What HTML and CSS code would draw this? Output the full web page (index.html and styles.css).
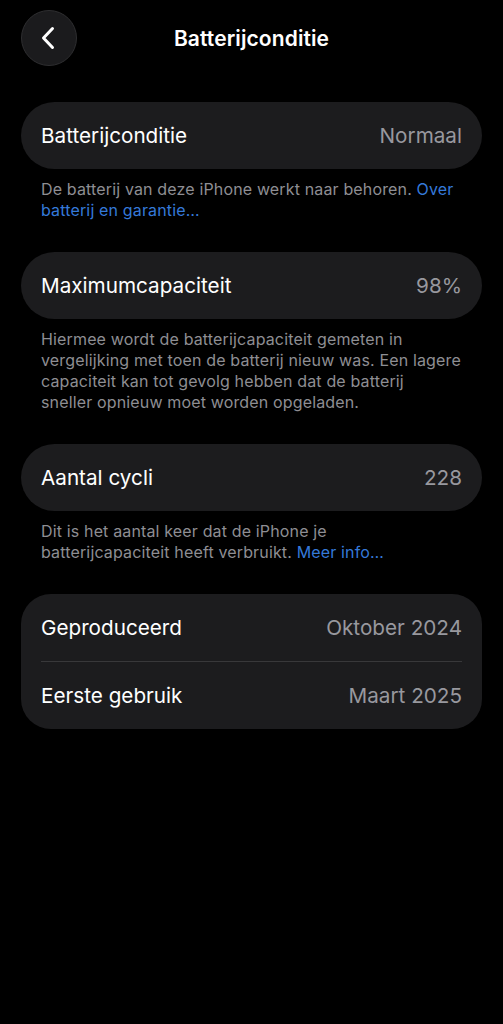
FILE: index.html
```html
<!DOCTYPE html>
<html lang="nl">
<head>
<meta charset="utf-8">
<link rel="stylesheet" href="styles.css">
</head>
<body>
<div class="screen">
  <header class="nav">
    <button class="back" aria-label="Terug">
      <svg width="16" height="24" viewBox="0 0 16 24"><path d="M12.5 2.5 L3.5 12 L12.5 21.5" fill="none" stroke="#fff" stroke-width="3" stroke-linecap="round" stroke-linejoin="round"/></svg>
    </button>
    <h1 class="title">Batterijconditie</h1>
  </header>

  <section class="group">
    <div class="card pill"><div class="row"><span class="label">Batterijconditie</span><span class="value">Normaal</span></div></div>
    <p class="footer">De batterij van deze iPhone werkt naar behoren. <a class="link">Over<br>batterij en garantie…</a></p>
  </section>

  <section class="group">
    <div class="card pill"><div class="row"><span class="label">Maximumcapaciteit</span><span class="value">98%</span></div></div>
    <p class="footer">Hiermee wordt de batterijcapaciteit gemeten in<br>vergelijking met toen de batterij nieuw was. Een lagere<br>capaciteit kan tot gevolg hebben dat de batterij<br>sneller opnieuw moet worden opgeladen.</p>
  </section>

  <section class="group">
    <div class="card pill"><div class="row"><span class="label">Aantal cycli</span><span class="value">228</span></div></div>
    <p class="footer">Dit is het aantal keer dat de iPhone je<br>batterijcapaciteit heeft verbruikt. <a class="link">Meer info…</a></p>
  </section>

  <section class="group">
    <div class="card rounded">
      <div class="row"><span class="label">Geproduceerd</span><span class="value">Oktober 2024</span></div>
      <div class="divider"></div>
      <div class="row"><span class="label">Eerste gebruik</span><span class="value">Maart 2025</span></div>
    </div>
  </section>
</div>
</body>
</html>
```

FILE: styles.css
```css
* { box-sizing: border-box; }
html, body {
  margin: 0;
  padding: 0;
  background: #000;
}
body {
  font-family: Inter, "Noto Sans", "Liberation Sans", sans-serif;
  color: #fff;
  -webkit-font-smoothing: antialiased;
}
.screen {
  width: 503px;
  min-height: 1024px;
  padding: 10px 21px 0 21px;
}
.nav {
  display: flex;
  align-items: center;
  height: 56px;
  position: relative;
  margin-bottom: 36px;
}
.back {
  width: 56px;
  height: 56px;
  border-radius: 50%;
  background: #1b1b1d;
  border: 1px solid #2e2e30;
  display: flex;
  align-items: center;
  justify-content: center;
  padding: 0 3px 0 0;
  flex: none;
}
.title {
  position: absolute;
  left: 0;
  right: 0;
  top: 0;
  height: 56px;
  margin: 0;
  display: flex;
  align-items: center;
  justify-content: center;
  font-size: 21px;
  font-weight: 600;
  letter-spacing: 0.1px;
  pointer-events: none;
}
.group {
  margin-bottom: 31px;
}
.card {
  background: #1c1c1e;
}
.pill {
  border-radius: 34px;
}
.rounded {
  border-radius: 30px;
}
.row {
  height: 67px;
  display: flex;
  align-items: center;
  justify-content: space-between;
  padding: 0 20px;
  font-size: 20.7px;
  letter-spacing: 0;
}
.label { color: #fff; }
.value { color: #98989e; }
.divider {
  height: 1px;
  background: #38383a;
  margin: 0 20px;
}
.footer {
  margin: 10px 0 0 0;
  padding: 0 16px 0 20px;
  font-size: 16px;
  line-height: 21px;
  color: #8e8e93;
  letter-spacing: 0.15px;
}
.link { color: #3579d9; }
```
